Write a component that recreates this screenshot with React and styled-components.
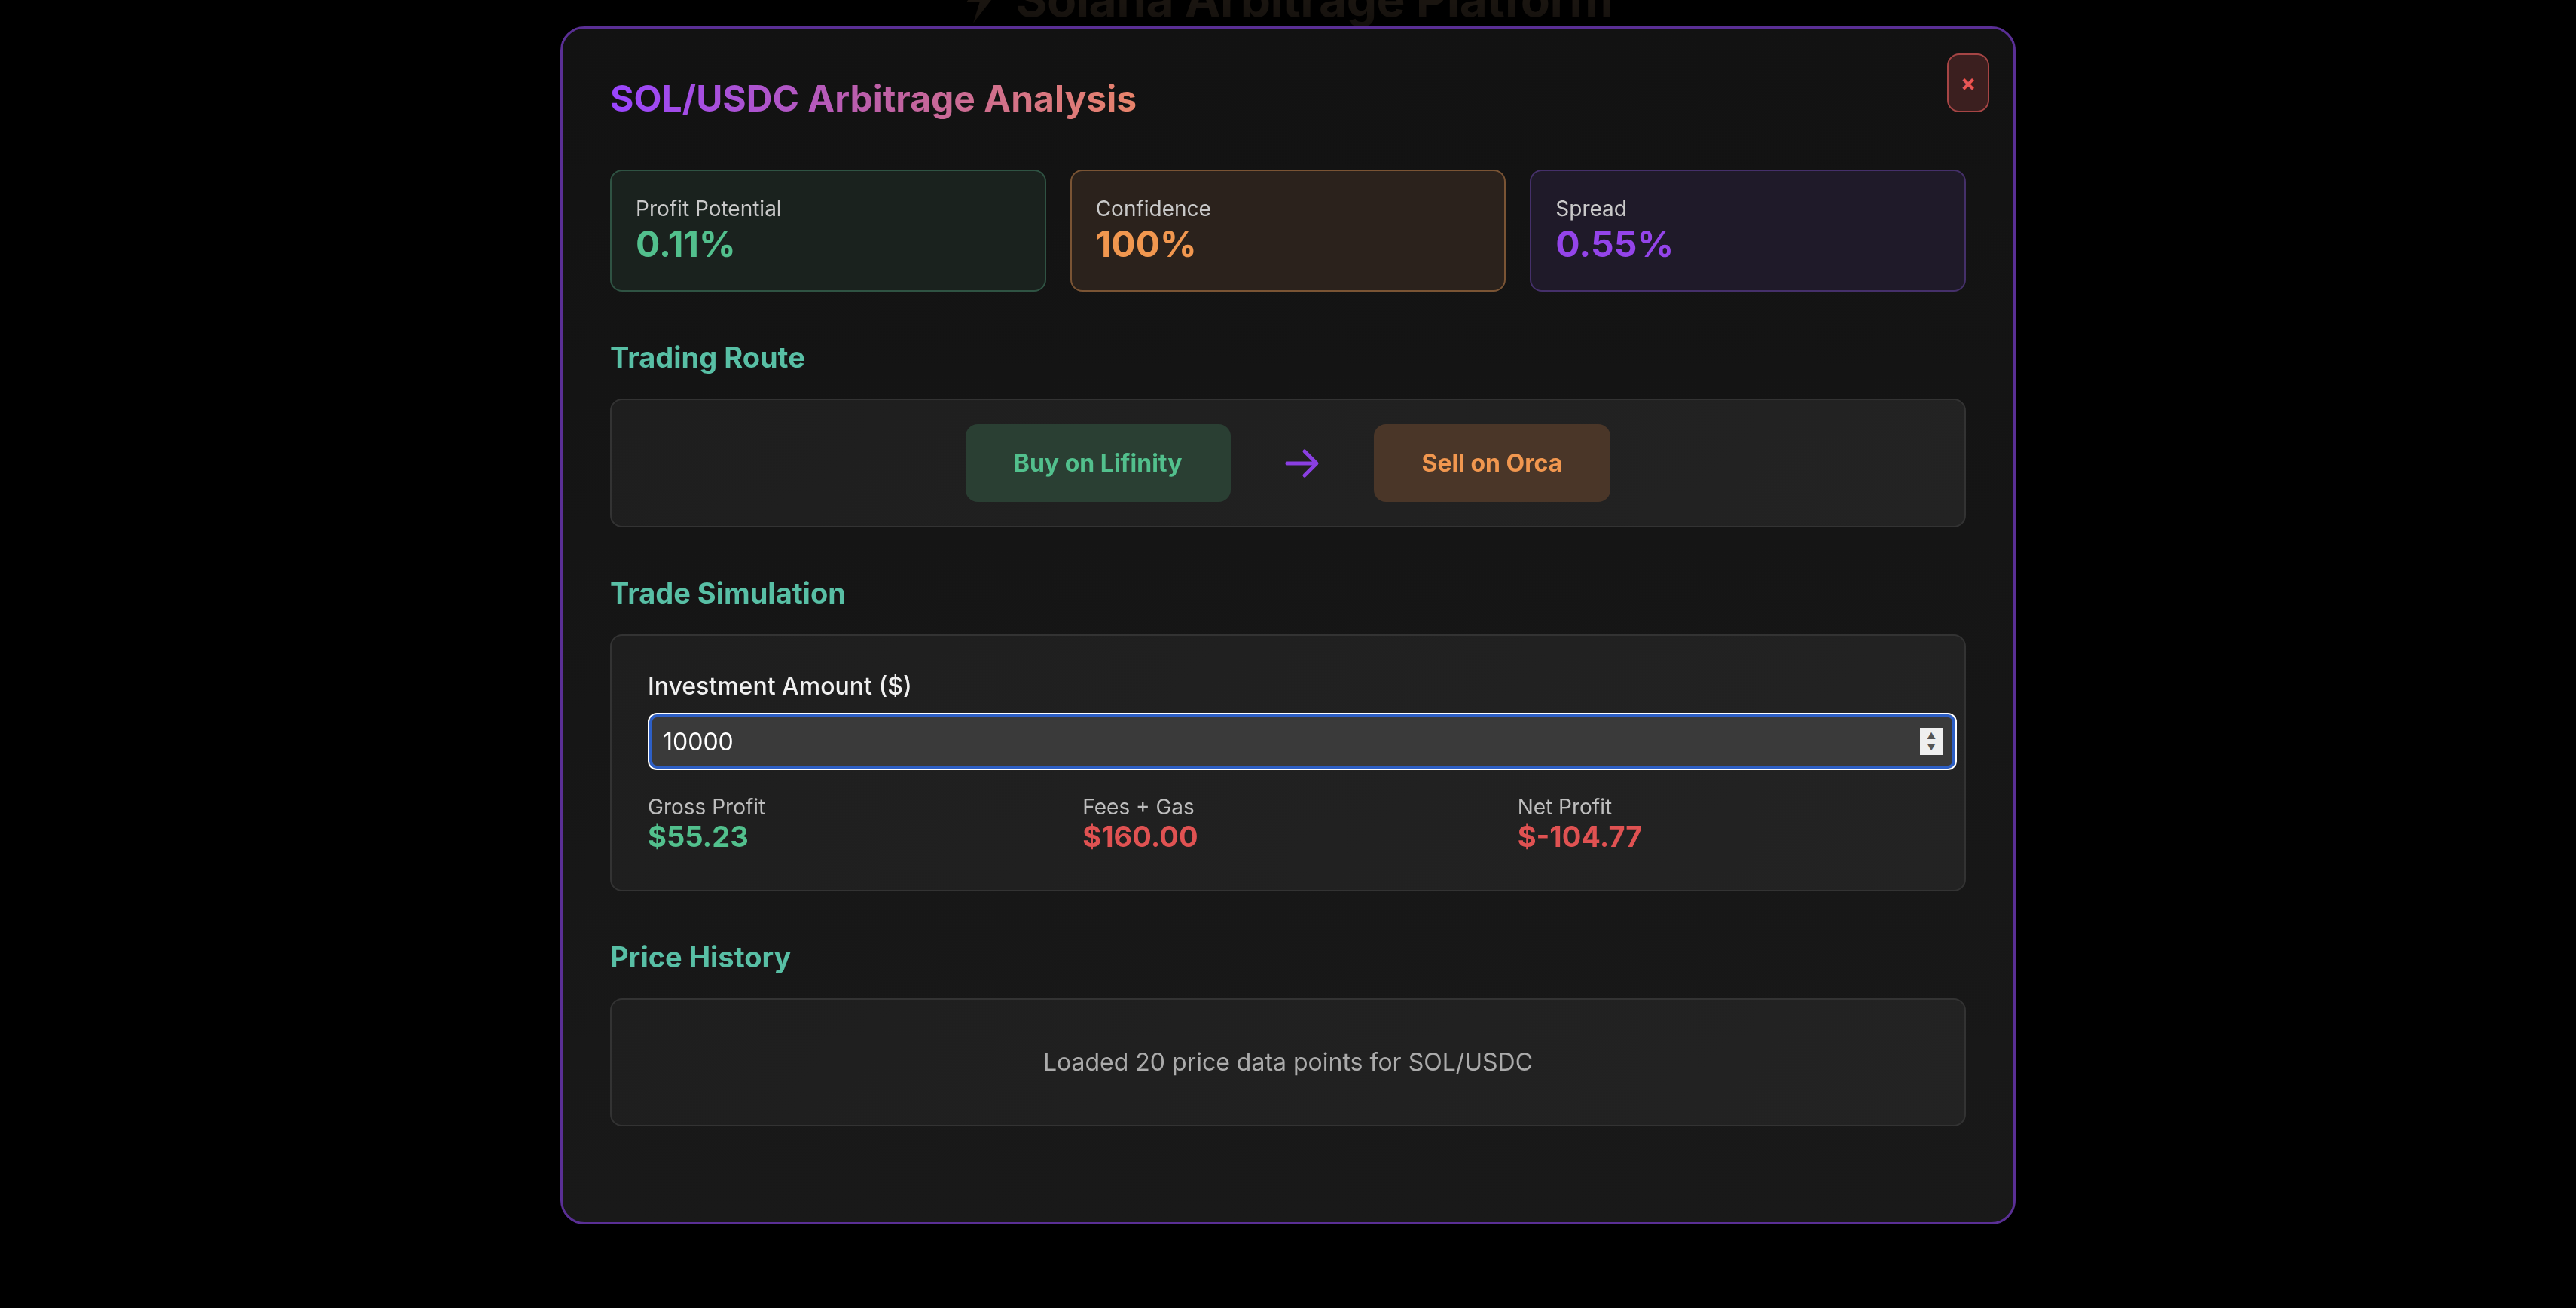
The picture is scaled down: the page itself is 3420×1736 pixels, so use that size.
import React from "react";
import styled, { createGlobalStyle } from "styled-components";

const GlobalStyle = createGlobalStyle`
  * { box-sizing: border-box; }
  html, body {
    margin: 0;
    padding: 0;
    background: #000;
    font-family: Inter, "Noto Sans", "Liberation Sans", sans-serif;
    overflow: hidden;
  }
`;

const stats = [
  { label: "Profit Potential", value: "0.11%", tone: "green" },
  { label: "Confidence", value: "100%", tone: "orange" },
  { label: "Spread", value: "0.55%", tone: "purple" },
];

const results = [
  { label: "Gross Profit", value: "$55.23", tone: "green" },
  { label: "Fees + Gas", value: "$160.00", tone: "red" },
  { label: "Net Profit", value: "$-104.77", tone: "red" },
];

const tones = {
  green: { text: "#52c08d", bg: "#1a221e", border: "#2f5343" },
  orange: { text: "#f1974f", bg: "#2b221c", border: "#7a5434" },
  purple: { text: "#9444ea", bg: "#1f1a29", border: "#45306a" },
  red: { text: "#e05252" },
};

export default function App() {
  return (
    <>
      <GlobalStyle />
      <BackPage>
        <BackTitle>
          <svg width="48" height="66" viewBox="0 0 44 60">
            <path d="M30 0 L4 34 H20 L12 60 L40 24 H24 Z" fill="#1b1611" />
          </svg>
          Solana Arbitrage Platform
        </BackTitle>
      </BackPage>

      <Overlay>
        <Modal>
          <CloseButton>×</CloseButton>
          <Title>SOL/USDC Arbitrage Analysis</Title>

          <StatGrid>
            {stats.map((s) => (
              <StatCard key={s.label} $tone={s.tone}>
                <StatLabel>{s.label}</StatLabel>
                <StatValue $tone={s.tone}>{s.value}</StatValue>
              </StatCard>
            ))}
          </StatGrid>

          <Section>
            <SectionTitle>Trading Route</SectionTitle>
            <RouteBox>
              <RouteStep $tone="green">Buy on Lifinity</RouteStep>
              <svg width="46" height="40" viewBox="0 0 46 40">
                <path
                  d="M3 20 H41 M26 4 L42 20 L26 36"
                  fill="none"
                  stroke="#8a3fe2"
                  strokeWidth="5"
                  strokeLinecap="round"
                  strokeLinejoin="round"
                />
              </svg>
              <RouteStep $tone="orange">Sell on Orca</RouteStep>
            </RouteBox>
          </Section>

          <Section>
            <SectionTitle>Trade Simulation</SectionTitle>
            <SimBox>
              <FieldLabel>Investment Amount ($)</FieldLabel>
              <InputWrap>
                <AmountInput type="text" defaultValue="10000" readOnly />
                <Spinner>
                  <span>▲</span>
                  <span>▼</span>
                </Spinner>
              </InputWrap>
              <ResultGrid>
                {results.map((r) => (
                  <div key={r.label}>
                    <ResultLabel>{r.label}</ResultLabel>
                    <ResultValue $tone={r.tone}>{r.value}</ResultValue>
                  </div>
                ))}
              </ResultGrid>
            </SimBox>
          </Section>

          <Section>
            <SectionTitle>Price History</SectionTitle>
            <HistoryBox>Loaded 20 price data points for SOL/USDC</HistoryBox>
          </Section>
        </Modal>
      </Overlay>
    </>
  );
}

const BackPage = styled.div`
  height: 100vh;
  display: flex;
  justify-content: center;
`;

const BackTitle = styled.h1`
  margin: -33px 0 0;
  display: flex;
  align-items: flex-end;
  gap: 22px;
  height: 64px;
  font-size: 64px;
  line-height: 1;
  font-weight: 700;
  color: #1b1611;
  letter-spacing: -0.5px;
`;

const Overlay = styled.div`
  position: fixed;
  inset: 0;
  display: flex;
  justify-content: center;
  align-items: flex-start;
  padding-top: 35px;
`;

const Modal = styled.div`
  position: relative;
  width: 1932px;
  padding: 63px;
  border: 3px solid #5a2f95;
  border-radius: 32px;
  background: linear-gradient(180deg, #121212 0%, #191919 100%);
  box-shadow: 0 0 40px rgba(0, 0, 0, 0.6);
  color: #fff;
`;

const CloseButton = styled.button`
  position: absolute;
  top: 33px;
  right: 32px;
  width: 56px;
  height: 78px;
  display: flex;
  align-items: center;
  justify-content: center;
  padding: 0;
  border: 2px solid #a64545;
  border-radius: 16px;
  background: #3b1f1f;
  color: #e85656;
  font-family: Inter, sans-serif;
  font-size: 30px;
  font-weight: 700;
  cursor: pointer;
`;

const Title = styled.h2`
  display: inline-block;
  margin: 0 0 64px;
  font-size: 48px;
  line-height: 60px;
  font-weight: 700;
  background: linear-gradient(90deg, #9945ff 0%, #bd5fa8 50%, #e8836a 100%);
  -webkit-background-clip: text;
  background-clip: text;
  color: transparent;
`;

const StatGrid = styled.div`
  display: grid;
  grid-template-columns: repeat(3, 1fr);
  gap: 32px;
  margin-bottom: 64px;
`;

const StatCard = styled.div`
  padding: 32px;
  border: 2px solid ${({ $tone }) => tones[$tone].border};
  border-radius: 16px;
  background: ${({ $tone }) => tones[$tone].bg};
`;

const StatLabel = styled.div`
  font-size: 28px;
  line-height: 36px;
  color: #c9c9c9;
`;

const StatValue = styled.div`
  font-size: 48px;
  line-height: 58px;
  font-weight: 700;
  color: ${({ $tone }) => tones[$tone].text};
`;

const Section = styled.section`
  margin-bottom: 64px;
`;

const SectionTitle = styled.h3`
  margin: 0 0 32px;
  font-size: 38px;
  line-height: 46px;
  font-weight: 700;
  color: #58bfa5;
`;

const Panel = styled.div`
  border: 2px solid #333;
  border-radius: 16px;
  background: linear-gradient(135deg, #1e1e1e 0%, #232323 100%);
`;

const RouteBox = styled(Panel)`
  display: flex;
  align-items: center;
  justify-content: center;
  gap: 72px;
  padding: 32px;
`;

const RouteStep = styled.div`
  padding: 32px 64px;
  border-radius: 16px;
  font-size: 32px;
  line-height: 39px;
  font-weight: 700;
  background: ${({ $tone }) => ($tone === "green" ? "#2a3f33" : "#4a3628")};
  color: ${({ $tone }) => tones[$tone].text};
`;

const SimBox = styled(Panel)`
  padding: 48px;
`;

const FieldLabel = styled.label`
  display: block;
  margin-bottom: 16px;
  font-size: 32px;
  line-height: 38px;
  font-weight: 500;
  color: #f0f0f0;
`;

const InputWrap = styled.div`
  position: relative;
  width: calc(100% + 38px);
  margin-bottom: 32px;
`;

const AmountInput = styled.input`
  display: block;
  width: 100%;
  height: 76px;
  padding: 0 18px;
  border: 2px solid #fff;
  border-radius: 12px;
  box-shadow: inset 0 0 0 4px #2d5fc6;
  background: #3a3a3a;
  color: #fff;
  font-family: Inter, sans-serif;
  font-size: 32px;
  outline: none;
`;

const Spinner = styled.div`
  position: absolute;
  top: 20px;
  right: 19px;
  width: 30px;
  height: 36px;
  display: flex;
  flex-direction: column;
  align-items: center;
  justify-content: center;
  background: #efefef;
  color: #555;
  font-size: 12px;
  line-height: 15px;
`;

const ResultGrid = styled.div`
  display: grid;
  grid-template-columns: repeat(3, 1fr);
  gap: 32px;
`;

const ResultLabel = styled.div`
  font-size: 28px;
  line-height: 34px;
  color: #bdbdbd;
`;

const ResultValue = styled.div`
  font-size: 38px;
  line-height: 45px;
  font-weight: 700;
  color: ${({ $tone }) => tones[$tone].text};
`;

const HistoryBox = styled(Panel)`
  padding: 64px 32px;
  text-align: center;
  font-size: 32px;
  line-height: 38px;
  color: #ababab;
`;
